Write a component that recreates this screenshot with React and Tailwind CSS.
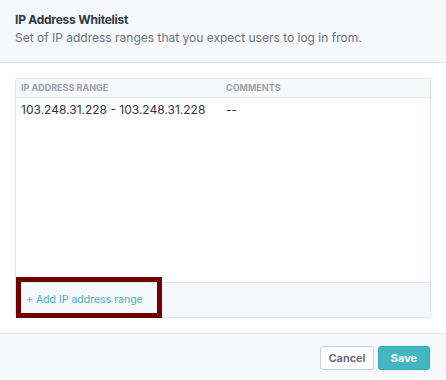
export default function App() {
  return (
    <div className="relative w-[446px] h-[380px] bg-white flex flex-col overflow-hidden" style={{ fontFamily: "Inter, 'Noto Sans', sans-serif" }}>
      <div className="h-[63px] shrink-0 bg-[#f6f8fb] border-b border-[#dfe5ec] px-[15px] pt-[12px]">
        <div className="text-[12px] leading-[16px] font-bold tracking-[-0.02em] text-[#2f3542]">IP Address Whitelist</div>
        <div className="mt-[2px] text-[12px] leading-[16px] text-[#6b7280]">Set of IP address ranges that you expect users to log in from.</div>
      </div>
      <div className="flex-1 px-[15px] pt-[15px] pb-[15px] border-b border-[#dfe5ec]">
        <div className="h-[240px] border border-[#dfe5ec] rounded-[3px] flex flex-col overflow-hidden">
          <div className="h-[19px] shrink-0 bg-[#f7f8fa] border-b border-[#dfe5ec] grid grid-cols-2 items-center px-[5px] text-[9px] font-bold text-[#9aa1ad]">
            <div>IP ADDRESS RANGE</div>
            <div className="pl-[3px]">COMMENTS</div>
          </div>
          <div className="flex-1 grid grid-cols-2 content-start px-[5px] pt-[4px] text-[12px] leading-[15px] text-[#2f3542]">
            <div>103.248.31.228 - 103.248.31.228</div>
            <div className="pl-[3px]">--</div>
          </div>
          <div className="h-[35px] shrink-0 bg-[#f7f8fb] border-t border-[#dfe5ec] flex items-center px-[10px] text-[10.5px] text-[#3eb3c2]">
            + Add IP address range
          </div>
        </div>
      </div>
      <div className="h-[46px] shrink-0 bg-[#f7f8fb] flex justify-end items-start pt-[12px] pr-[16px] gap-[4px]">
        <button className="w-[54px] h-[24px] rounded-[3px] border border-[#c9d1db] bg-white text-[11px] font-semibold text-[#5f6673]">Cancel</button>
        <button className="w-[52px] h-[24px] rounded-[3px] border border-[#38a7b5] bg-[#44b5c3] text-[11px] font-bold text-white">Save</button>
      </div>
      <div className="absolute left-[16px] top-[277px] w-[146px] h-[41px] border-[5px] border-[#6e0000] pointer-events-none" />
    </div>
  );
}
